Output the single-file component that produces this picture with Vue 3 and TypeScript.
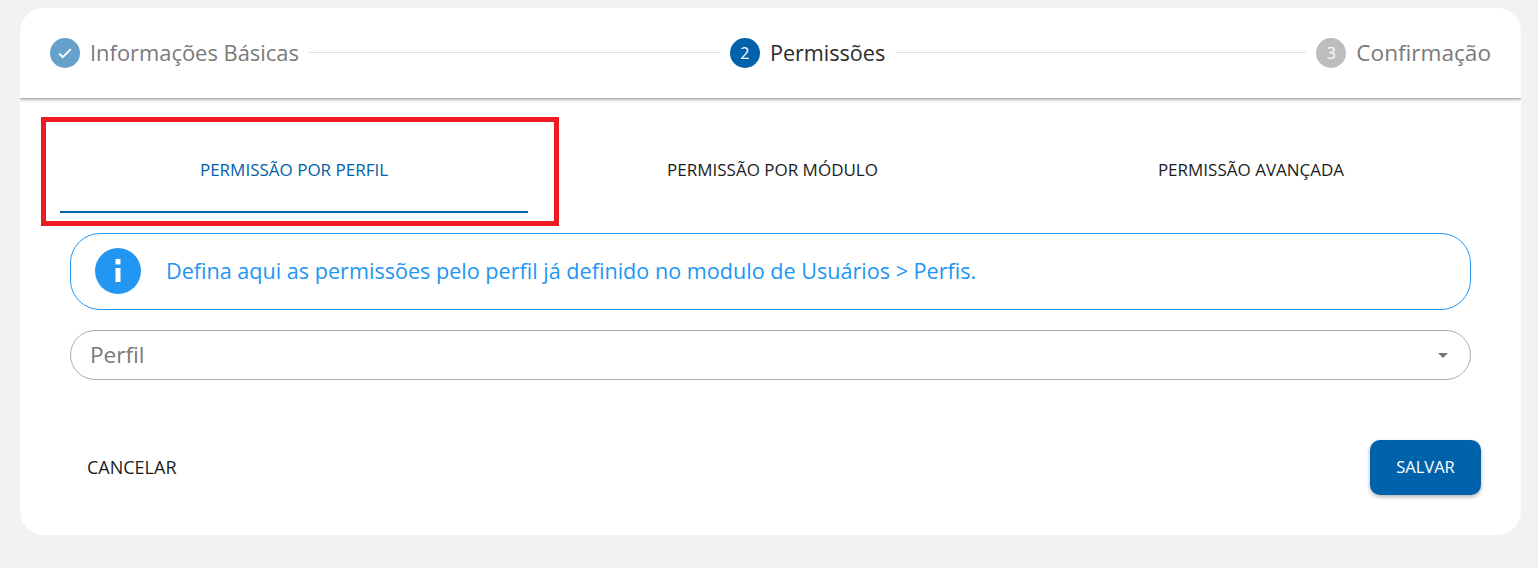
<script setup lang="ts">
interface Step { label: string; mark: string; state: 'done' | 'active' | 'todo' }
const steps: Step[] = [
  { label: 'Informações Básicas', mark: '', state: 'done' },
  { label: 'Permissões', mark: '2', state: 'active' },
  { label: 'Confirmação', mark: '3', state: 'todo' },
]
const tabs = ['PERMISSÃO POR PERFIL', 'PERMISSÃO POR MÓDULO', 'PERMISSÃO AVANÇADA']
</script>

<template>
  <main class="page">
    <section class="card">
      <header class="stepper">
        <template v-for="(s, i) in steps" :key="s.label">
          <div v-if="i > 0" class="line"></div>
          <div class="step" :class="s.state">
            <span class="dot">
              <svg v-if="s.state === 'done'" width="18" height="18" viewBox="0 0 24 24" fill="none" stroke="#fff" stroke-width="2.6">
                <path d="M4.2 12.8 9 17.6 19.8 6.8" />
              </svg>
              <template v-else>{{ s.mark }}</template>
            </span>
            <span class="label">{{ s.label }}</span>
          </div>
        </template>
      </header>

      <div class="body">
        <nav class="tabs">
          <div v-for="(t, i) in tabs" :key="t" class="tab" :class="{ on: i === 0 }">{{ t }}</div>
          <div class="mark"></div>
        </nav>

        <div class="alert">
          <svg class="alert-icon" width="46" height="46" viewBox="0 0 46 46">
            <circle cx="23" cy="23" r="23" fill="#2196f3" />
            <rect x="20.5" y="11" width="5" height="5.5" fill="#fff" />
            <rect x="20.5" y="20" width="5" height="14" fill="#fff" />
          </svg>
          <span class="alert-text">Defina aqui as permissões pelo perfil já definido no modulo de Usuários &gt; Perfis.</span>
        </div>

        <div class="select">
          <span class="select-text">Perfil</span>
          <i class="caret"></i>
        </div>

        <footer class="actions">
          <button class="btn ghost" type="button">CANCELAR</button>
          <button class="btn solid" type="button">SALVAR</button>
        </footer>
      </div>
    </section>
  </main>
</template>

<style>
html, body { background: #f2f2f2; }
</style>

<style scoped>
.page {
  box-sizing: border-box;
  height: 568px;
  padding: 8px 17px 33px 20px;
  background: #f2f2f2;
  font-family: "Open Sans", "Lato", sans-serif;
}
.card {
  height: 527px;
  background: #fff;
  border-radius: 24px;
  overflow: hidden;
}
.stepper {
  display: flex;
  align-items: center;
  box-sizing: border-box;
  height: 91px;
  padding: 0 30px 1px 30px;
  border-bottom: 1px solid #b4b4b4;
  box-shadow: 0 1px 3px rgba(0, 0, 0, 0.3);
}
.step { display: flex; align-items: center; gap: 10px; }
.dot {
  display: flex;
  align-items: center;
  justify-content: center;
  width: 30px;
  height: 30px;
  border-radius: 50%;
  color: #fff;
  font-size: 16px;
}
.label { font-size: 21.9px; color: #7a7a7a; }
.done .dot { background: #66a1cc; }
.active .dot { background: #0062aa; }
.active .label { color: #2b2b2b; font-size: 21.6px; }
.todo .dot { background: #bdbdbd; }
.todo .label { font-size: 22.6px; }
.line { flex: 1; height: 1px; margin: -1px 10px 0; background: #e0e0e0; }
.tabs {
  position: relative;
  display: grid;
  grid-template-columns: repeat(3, 468px);
  column-gap: 10.5px;
  height: 113px;
  padding: 21px 0 0 40px;
  box-sizing: border-box;
}
.tab {
  display: flex;
  align-items: center;
  justify-content: center;
  height: 93px;
  padding-top: 16px;
  padding-bottom: 8px;
  box-sizing: border-box;
  font-size: 17px;
  color: #1c1c1c;
  border-bottom: 2px solid transparent;
}
.tab.on { color: #0062aa; border-bottom-color: #0062aa; }
.mark {
  position: absolute;
  left: 21px;
  top: 18px;
  width: 518px;
  height: 109px;
  box-sizing: border-box;
  border: 5px solid #ed1c24;
  pointer-events: none;
}
.alert {
  display: flex;
  align-items: center;
  gap: 25px;
  box-sizing: border-box;
  height: 77px;
  margin: 21px 50px 0;
  padding-left: 24px;
  border: 1px solid #2196f3;
  border-radius: 30px;
  color: #2196f3;
  font-size: 21.6px;
}
.alert-icon { flex: none; margin-bottom: 2px; }
.alert-text { margin-bottom: 2px; }
.select {
  display: flex;
  align-items: center;
  justify-content: space-between;
  box-sizing: border-box;
  height: 50px;
  margin: 20px 50px 0;
  padding: 0 22px 0 19px;
  border: 1px solid #adadad;
  border-radius: 25px;
  color: #7a7a7a;
  font-size: 22.6px;
}
.select-text { margin-bottom: 2px; }
.caret {
  width: 0;
  height: 0;
  border-left: 5.5px solid transparent;
  border-right: 5.5px solid transparent;
  border-top: 5.5px solid #757575;
}
.actions {
  display: flex;
  align-items: center;
  justify-content: space-between;
  margin: 60px 40px 0 50px;
}
.btn {
  height: 55px;
  border: 0;
  padding-bottom: 3px;
  font-family: inherit;
  font-size: 16.5px;
  cursor: pointer;
}
.ghost { padding-left: 17px; padding-right: 17px; background: transparent; color: #1c1c1c; font-size: 18px; }
.solid {
  width: 111px;
  border-radius: 10px;
  background: #0062aa;
  color: #fff;
  box-shadow: 0 2px 4px rgba(0, 0, 0, 0.3);
}
</style>
